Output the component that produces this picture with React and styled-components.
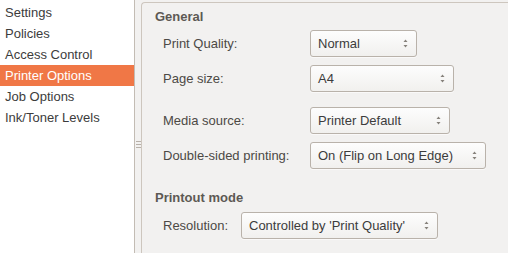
import React from 'react';
import styled, { createGlobalStyle } from 'styled-components';

const GlobalStyle = createGlobalStyle`
    html, body {
        margin:0;
        padding:0;
        background:#f2f1f0;
        overflow:hidden;
    }
    body {
        font-family:"Liberation Sans", Arial, sans-serif;
        font-size:13px;
        color:#3c3c3c;
    }
`;

const Window = styled.div`
    display:flex;
    width:508px;
    height:253px;
    background:#f2f1f0;
`;
const Sidebar = styled.ul`
    list-style:none;
    margin:0;
    padding:2px 0 0 0;
    width:134px;
    background:#ffffff;
    border-right:1px solid #c3bcb4;
`;
const SideItem = styled.li`
    height:21px;
    line-height:21px;
    padding-left:5px;
    white-space:nowrap;
    color:${p => (p.$active ? '#ffffff' : '#3c3c3c')};
    background:${p => (p.$active ? '#f07746' : 'transparent')};
`;
const Handle = styled.div`
    width:6px;
    display:flex;
    flex-direction:column;
    align-items:center;
    padding-top:141px;
    gap:2px;
`;
const GripLine = styled.span`
    display:block;
    width:5px;
    height:1px;
    background:#b8b1a9;
`;
const Frame = styled.section`
    flex:1;
    margin-top:2px;
    border-top:1px solid #cdc6be;
    border-left:1px solid #cdc6be;
    border-top-left-radius:4px;
    padding:6px 0 0 13px;
`;
const Heading = styled.h3`
    margin:${p => p.$top || 0}px 0 0 0;
    font-size:13px;
    line-height:15px;
    font-weight:bold;
    color:#5d5954;
`;
const Form = styled.div`
    display:grid;
    grid-template-columns:${p => p.$labelWidth}px auto;
    justify-items:start;
    align-items:center;
    padding-left:8px;
`;
const Label = styled.span`
    color:#4c4945;
    margin-top:${p => p.$top || 0}px;
    white-space:nowrap;
`;
const Combo = styled.div`
    box-sizing:border-box;
    display:flex;
    align-items:center;
    justify-content:space-between;
    width:${p => p.$width}px;
    height:27px;
    margin-top:${p => p.$top || 0}px;
    padding:0 7px 0 7px;
    border:1px solid #b9b2aa;
    border-radius:3px;
    background:linear-gradient(#fdfdfd, #f1f0ee);
    box-shadow:0 1px 0 rgba(255,255,255,0.6);
    color:#3c3c3c;
    white-space:nowrap;
`;
const Arrows = () => (
    <svg width="7" height="13" viewBox="0 0 7 13">
        <path d="M3.5 2.5 L5.5 5 L1.5 5 Z" fill="#85807a" />
        <path d="M3.5 10.5 L5.5 8 L1.5 8 Z" fill="#85807a" />
    </svg>
);

const Select = ({ width, top, children }) => (
    <Combo $width={width} $top={top}>
        <span>{children}</span>
        <Arrows />
    </Combo>
);

const sections = ['Settings', 'Policies', 'Access Control', 'Printer Options', 'Job Options', 'Ink/Toner Levels'];

const App = () => {
    return (
        <Window>
            <GlobalStyle />
            <Sidebar>
                {sections.map(s => (
                    <SideItem key={s} $active={s === 'Printer Options'}>{s}</SideItem>
                ))}
            </Sidebar>
            <Handle>
                <GripLine />
                <GripLine />
                <GripLine />
            </Handle>
            <Frame>
                <Heading>General</Heading>
                <Form $labelWidth={147}>
                    <Label $top={6}>Print Quality:</Label>
                    <Select width={107} top={6}>Normal</Select>
                    <Label $top={8}>Page size:</Label>
                    <Select width={144} top={8}>A4</Select>
                    <Label $top={15}>Media source:</Label>
                    <Select width={140} top={15}>Printer Default</Select>
                    <Label $top={8}>Double-sided printing:</Label>
                    <Select width={176} top={8}>On (Flip on Long Edge)</Select>
                </Form>
                <Heading $top={21}>Printout mode</Heading>
                <Form $labelWidth={78}>
                    <Label $top={7}>Resolution:</Label>
                    <Select width={197} top={7}>Controlled by 'Print Quality'</Select>
                </Form>
            </Frame>
        </Window>
    );
};

export default App;
